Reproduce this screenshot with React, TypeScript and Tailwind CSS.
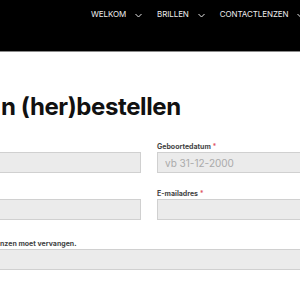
import * as React from 'react';

const Chevron: React.FC = () => (
  <svg width="7" height="5" viewBox="0 0 7 5" fill="none" className="ml-[9px] mt-[2px] shrink-0">
    <path d="M0.5 1L3.5 4L6.5 1" stroke="#e5e5e5" strokeWidth="1" />
  </svg>
);

const NavItem: React.FC<{ label: string }> = ({ label }) => (
  <div className="flex items-center shrink-0 mr-[15px]">
    <span className="text-[8px] tracking-[-0.1px] text-[#eeeeee] leading-none">{label}</span>
    <Chevron />
  </div>
);

const Label: React.FC<{ text: string; required?: boolean }> = ({ text, required }) => (
  <div className="text-[7px] font-bold text-[#444] leading-none h-[8px] mb-[1px]">
    {text}
    {required && <span className="text-[#e05a6a]"> *</span>}
  </div>
);

const Input: React.FC<{ placeholder?: string }> = ({ placeholder }) => (
  <input
    placeholder={placeholder}
    className="block w-full h-[21px] bg-[#ebebeb] border border-[#d0d0d0] px-[7px] text-[10px] placeholder:text-[#aaaaaa] outline-none"
  />
);

export default function App() {
  return (
    <div className="w-[300px] h-[300px] overflow-hidden bg-white font-['Inter',sans-serif]">
      <header className="h-[52px] bg-black border-b border-[#8a8a8a]">
        <nav className="flex items-center pl-[91px] pt-[10px] w-[400px]">
          <NavItem label="WELKOM" />
          <NavItem label="BRILLEN" />
          <NavItem label="CONTACTLENZEN" />
        </nav>
      </header>

      <main className="pt-[40px]">
        <h1 className="text-[24px] font-bold text-[#111] leading-[29px] tracking-[-0.4px] pl-[1px]">
          n (her)bestellen
        </h1>

        <div className="mt-[22px] ml-[-60px] w-[420px] grid grid-cols-[201px_201px] gap-x-[16px] gap-y-[17px]">
          <div>
            <div className="h-[9px]" />
            <Input />
          </div>
          <div>
            <Label text="Geboortedatum" required />
            <Input placeholder="vb 31-12-2000" />
          </div>
          <div>
            <div className="h-[9px]" />
            <Input />
          </div>
          <div>
            <Label text="E-mailadres" required />
            <Input />
          </div>
          <div className="col-span-2 ml-[60px] mt-[3px]">
            <Label text="nzen moet vervangen." />
            <div className="ml-[-60px]">
              <Input />
            </div>
          </div>
        </div>
      </main>
    </div>
  );
}
